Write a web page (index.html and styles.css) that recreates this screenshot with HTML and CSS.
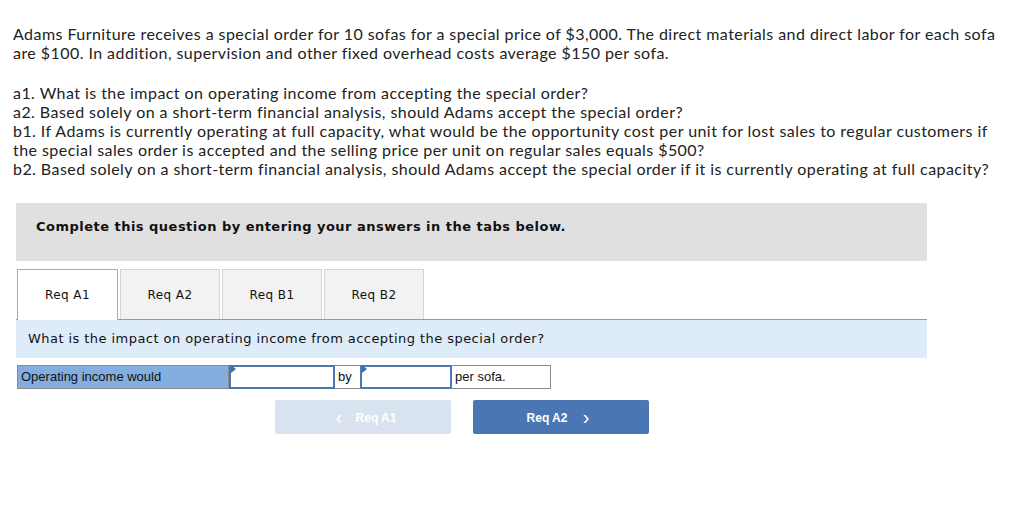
FILE: index.html
```html
<!DOCTYPE html>
<html>
<head>
<meta charset="utf-8">
<link rel="stylesheet" href="styles.css">
</head>
<body>
<div class="page">
  <p class="intro">Adams Furniture receives a special order for 10 sofas for a special price of $3,000. The direct materials and direct labor for each sofa are $100. In addition, supervision and other fixed overhead costs average $150 per sofa.</p>
  <p class="questions">a1. What is the impact on operating income from accepting the special order?<br>a2. Based solely on a short-term financial analysis, should Adams accept the special order?<br>b1. If Adams is currently operating at full capacity, what would be the opportunity cost per unit for lost sales to regular customers if the special sales order is accepted and the selling price per unit on regular sales equals $500?<br>b2. Based solely on a short-term financial analysis, should Adams accept the special order if it is currently operating at full capacity?</p>

  <div class="panel">
    <div class="banner">Complete this question by entering your answers in the tabs below.</div>
    <div class="tabs">
      <div class="tab active">Req A1</div>
      <div class="tab">Req A2</div>
      <div class="tab">Req B1</div>
      <div class="tab">Req B2</div>
    </div>
    <div class="prompt">What is the impact on operating income from accepting the special order?</div>
    <div class="answer-row">
      <div class="cell label">Operating income would</div>
      <div class="cell input w1"><span class="flag"></span></div>
      <div class="cell text by">by</div>
      <div class="cell input w2"><span class="flag"></span></div>
      <div class="cell text unit">per sofa.</div>
    </div>
    <div class="nav">
      <button class="btn prev"><span class="chev">&lsaquo;</span> Req A1</button>
      <button class="btn next">Req A2 <span class="chev">&rsaquo;</span></button>
    </div>
  </div>
</div>
</body>
</html>
```
FILE: styles.css
```css
* { box-sizing: border-box; }
body {
  margin: 0;
  background: #fff;
  color: #222;
}
.page {
  padding: 24px 13px 0 13px;
  width: 1024px;
}
.intro, .questions {
  font-family: Lato, "Open Sans", sans-serif;
  font-size: 16px;
  letter-spacing: 0.44px;
  line-height: 19px;
  margin: 0;
  color: #222;
  width: 994px;
}
.intro { margin-bottom: 21px; }
.panel {
  margin-top: 25px;
  margin-left: 3px;
  width: 911px;
}
.banner {
  background: #e0e0e0;
  height: 58px;
  padding: 16px 20px 0 20px;
  font-family: "DejaVu Sans", Verdana, sans-serif;
  font-weight: bold;
  font-size: 13px;
  letter-spacing: 0.48px;
  color: #111;
}
.tabs {
  display: flex;
  gap: 2px;
  margin-top: 8px;
  padding-left: 1px;
  border-bottom: 1px solid #999;
}
.tab {
  width: 100px;
  height: 50px;
  display: flex;
  align-items: center;
  justify-content: center;
  background: #f2f2f2;
  border: 1px solid #d4d4d4;
  border-bottom: none;
  font-family: "DejaVu Sans", Verdana, sans-serif;
  font-size: 12px;
  letter-spacing: 0.4px;
  color: #111;
}
.tab.active {
  width: 101px;
  background: #fff;
  border-color: #aaa;
  margin-bottom: -1px;
  height: 51px;
}
.prompt {
  background: #deecf9;
  height: 38px;
  padding: 11px 0 0 12px;
  font-family: "DejaVu Sans", Verdana, sans-serif;
  font-size: 13px;
  letter-spacing: 0.44px;
  color: #111;
}
.answer-row {
  display: flex;
  margin-top: 7px;
  margin-left: 1px;
  height: 24px;
}
.cell {
  height: 24px;
  font-family: "Liberation Sans", Arial, sans-serif;
  font-size: 13px;
  color: #111;
  line-height: 21px;
}
.label {
  width: 212px;
  background: #84ade0;
  border: 1px solid #8a8a8a;
  padding-left: 3px;
}
.input {
  position: relative;
  background: #fff;
  border: 2px solid #4e78b0;
}
.w1 { width: 106px; }
.w2 { width: 92px; }
.flag {
  position: absolute;
  left: 0;
  top: -2px;
  width: 0;
  height: 0;
  border-top: 4px solid transparent;
  border-bottom: 4px solid transparent;
  border-left: 5px solid #3d6fb3;
}
.text {
  background: #fff;
  border: 1px solid #8a8a8a;
  border-left: none;
  border-right: none;
  padding-left: 3px;
}
.by { width: 25px; }
.unit {
  width: 99px;
  border-right: 1px solid #8a8a8a;
}
.nav {
  display: flex;
  gap: 22px;
  margin-top: 11px;
  padding-left: 259px;
}
.btn {
  width: 176px;
  height: 34px;
  border: none;
  border-radius: 2px;
  color: #fff;
  font-family: "Liberation Sans", Arial, sans-serif;
  font-weight: bold;
  font-size: 12px;
  padding: 0;
}
.prev { background: #d9e3ef; }
.next { background: #4a77b4; }
.chev {
  font-size: 20px;
  font-weight: normal;
  vertical-align: -2px;
  margin: 0 6px;
}
.prev .chev { margin-right: 10px; }
.next .chev { margin-left: 12px; }
```
